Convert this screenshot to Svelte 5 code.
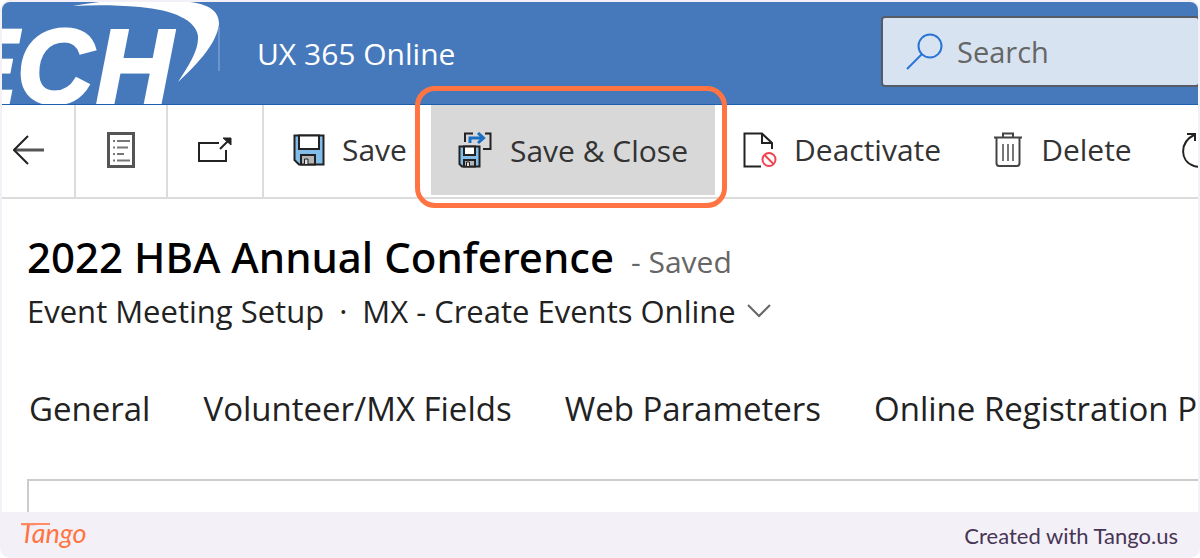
<script>
  const tabs = ['General', 'Volunteer/MX Fields', 'Web Parameters', 'Online Registration P'];
</script>

<div class="frame">
  <div class="card">
    <header>
      <svg class="logo" width="218" height="102" viewBox="2 2 218 102" role="img" aria-label="ECH">
        <text y="103" x="-53 17 96">ECH</text>
        <path d="M73 6C98 1 148-4 190 2C211 5 219 12 219 24C217 42 200 62 178 82C189 65 199 50 198 36C196 20 173 10 140 7C116 5 94 5 73 6Z" />
        <path class="rule" d="M219 27V71" />
      </svg>
      <span class="app-name">UX 365 Online</span>
      <label class="search">
        <svg width="38" height="38" viewBox="0 0 38 38" aria-hidden="true">
          <circle cx="25" cy="13" r="11.5" /><path d="M17 21L2 36" />
        </svg>
        <input type="search" placeholder="Search" aria-label="Search" />
      </label>
    </header>

    <nav class="toolbar" aria-label="Commands">
      <button class="square back" aria-label="Back">
        <svg width="32" height="30" viewBox="0 0 32 30"><path class="mid" d="M31 15H2" /><path d="M15 1L1 15L15 29" /></svg>
      </button>
      <button class="square form" aria-label="Form">
        <svg width="28" height="36" viewBox="0 0 28 36">
          <path class="mid" d="M1.5 1.5H26.5V34.5H1.5Z" />
          <path class="soft" d="M6 9H8M10 9H23M6 15.500H8M10 15.500H21M6 22H8M10 22H17M6 28.500H8M10 28.500H23" />
        </svg>
      </button>
      <button class="square popout" aria-label="Open in new window">
        <svg width="36" height="28" viewBox="0 0 36 28">
          <path d="M22 7H2V25H29V14M23 13L31 5" /><path class="tip" d="M26 2H34V9Z" />
        </svg>
      </button>
      <button class="command save">
        <svg width="32" height="32" viewBox="0 0 32 32">
          <path class="blue" d="M1.500 1.500H30.500V30.500H6L1.500 26Z" />
          <path class="paper" d="M6 1.500H26V15H6Z" />
          <path class="grey" d="M8 30.500V21H22V30.500Z" />
          <path class="slot" d="M11.500 25H15V30.500H11.500Z" />
        </svg>
        Save
      </button>
      <button class="command close">
        <svg width="34" height="36" viewBox="0 0 34 36">
          <path d="M7 10V1.500H15M27 1.500H32.500V17H25" />
          <path class="arrow" d="M12 11V6H25M20 1L25.500 6L20 11" />
          <path class="blue" d="M1.500 14.500H21.500V34.500H4L1.500 32Z" />
          <path class="paper" d="M6 14.500H17V23H6Z" />
          <path class="grey" d="M6 34.500V28H17V34.500Z" />
          <path class="slot" d="M8.500 30H11.500V34.500H8.500Z" />
        </svg>
        Save &amp; Close
      </button>
      <button class="command deactivate">
        <svg width="34" height="36" viewBox="0 0 34 36">
          <path d="M18 34.500H1.500V1.500H19L29 11V17M19 1.500V11H29" />
          <g class="ban"><circle cx="26" cy="27.500" r="6.500" /><path d="M21.500 23L30.500 32" /></g>
        </svg>
        Deactivate
      </button>
      <button class="command delete">
        <svg width="30" height="36" viewBox="0 0 30 36">
          <path class="bin" d="M1 5.500H29M10 5V1.500H20V5M3.500 6V31Q3.500 34 6 34H24Q26.500 34 26.500 31V6" />
          <path class="soft" d="M10 12V29M15 12V29M20 12V29" />
        </svg>
        Delete
      </button>
      <button class="command refresh" aria-label="Refresh">
        <svg width="36" height="36" viewBox="0 0 36 36"><path d="M12 3C-2 10-3 29 12 34C24 37 34 29 34 19C34 11 29 5 22 3M5 2H13V9" /></svg>
      </button>
    </nav>

    <main>
      <div class="title"><h1>2022 HBA Annual Conference</h1><span>- Saved</span></div>
      <div class="sub">
        <span>Event Meeting Setup</span><span class="dot">·</span>
        <button>MX - Create Events Online
          <svg width="24" height="14" viewBox="0 0 24 14" aria-hidden="true"><path d="M1 1L12 12L23 1" /></svg>
        </button>
      </div>
      <div class="tabs" role="tablist">
        {#each tabs as tab}<button role="tab">{tab}</button>{/each}
      </div>
      <section></section>
    </main>
  </div>
  <footer><span class="tango">Tango</span><span>Created with Tango.us</span></footer>
</div>

<style>
  :global(body) { margin: 0; background: #fff; }
  .frame {
    box-sizing: border-box; min-height: 100vh; padding: 2px 2px 0; display: flex; flex-direction: column;
    background: #f3f1f7; border-radius: 10px; overflow: hidden;
    font-family: "Open Sans", "Noto Sans", sans-serif;
  }
  .card { flex: 1; display: flex; flex-direction: column; background: #fff; border-radius: 8px 8px 0 0; overflow: hidden; }
  button { font: inherit; color: inherit; background: none; border: 0; padding: 0; white-space: nowrap; }
  svg { flex: none; }
  header { display: flex; height: 102px; background: #4679bb; border-bottom: 1px solid #1c5fae; color: #fff; }
  .logo { fill: #fff; font: italic bold 106px "Liberation Sans", Arial, sans-serif; }
  .logo text { stroke: #fff; stroke-width: 3; }
  .rule { stroke: #8fb0da; stroke-width: 1; }
  .app-name { margin-left: 37px; font-size: 30px; line-height: 104px; white-space: nowrap; }
  .search {
    box-sizing: border-box; display: flex; align-items: center; gap: 14px; height: 71px; width: 319px;
    margin: 14px -2px 0 auto; padding-left: 22px; background: #d7e3f1; border: 2px solid #555c66; border-radius: 4px;
  }
  .search svg { fill: none; stroke: #2a74d6; stroke-width: 2; }
  .search input { min-width: 0; flex: 1; padding: 0; border: 0; outline: 0; background: none; font: 29px "Open Sans", sans-serif; color: #666; }
  .search input::placeholder { color: #666; opacity: 1; }
  .toolbar { display: flex; height: 92px; border-bottom: 2px solid #dcdcdc; font-size: 30px; color: #333; }
  .toolbar svg { fill: none; stroke: #222; stroke-width: 2; }
  .square { flex: none; box-sizing: border-box; display: flex; align-items: center; justify-content: center; padding-bottom: 2px; border-right: 2px solid #dcdcdc; }
  .back { width: 74px; padding-right: 18px; }
  .form { width: 92px; }
  .popout { width: 96px; }
  .command { position: relative; flex: none; display: flex; align-items: center; gap: 17px; padding-bottom: 3px; }
  .save { margin-left: 29px; }
  .close { box-sizing: border-box; margin-left: 24px; height: 90px; padding: 0 27px; gap: 18px; background: #d8d8d8; }
  .close::after { content: ""; position: absolute; inset: -19px -12px -13px -16px; border: 5px solid #ff7442; border-radius: 20px; }
  .deactivate { margin-left: 28px; }
  .delete { margin-left: 52px; gap: 18px; }
  .refresh { margin-left: 50px; }
  .toolbar .mid { stroke: #555; stroke-width: 3; }
  .toolbar .bin { stroke: #444; }
  .toolbar .soft { stroke: #777; }
  .toolbar .tip { fill: #222; stroke-width: 1; }
  .toolbar .blue { fill: #83bdea; }
  .toolbar .paper { fill: #fff; }
  .toolbar .grey { fill: #b5b5b5; }
  .toolbar .slot { fill: #ddd; stroke-width: 1; }
  .toolbar .arrow { stroke: #1b6fc2; stroke-width: 3; }
  .toolbar .ban { stroke: #f04450; }
  main { flex: 1; display: flex; flex-direction: column; padding: 28px 0 0 25px; }
  .title { display: flex; align-items: baseline; gap: 17px; line-height: 60px; white-space: nowrap; }
  h1 { margin: 0; font-family: "Noto Sans", "Open Sans", sans-serif; font-size: 42px; font-weight: 500; color: #000; }
  .title span { font-size: 30px; color: #666; }
  .sub { display: flex; align-items: baseline; line-height: 38px; font-size: 31px; color: #222; white-space: nowrap; }
  .dot { margin: 0 15px; }
  .sub button { display: flex; align-items: center; gap: 11px; }
  .sub svg { fill: none; stroke: #666; stroke-width: 2; }
  .tabs { display: flex; gap: 53px; margin-top: 55px; padding-left: 2px; line-height: 48px; font-size: 33px; color: #222; }
  section { flex: 1; margin-top: 46px; border: 2px solid #ccc; border-width: 2px 0 0 2px; }
  footer { display: flex; align-items: center; justify-content: space-between; height: 46px; padding: 0 20px 0 18px; font: 22px "Lato", sans-serif; color: #483556; }
  .tango { position: relative; color: #ff7442; font-style: italic; font-size: 27px; line-height: 40px; padding-bottom: 4px; }
  .tango::before { content: ""; position: absolute; left: 1px; top: 10px; width: 29px; height: 2px; background: #ff8c63; }
</style>
